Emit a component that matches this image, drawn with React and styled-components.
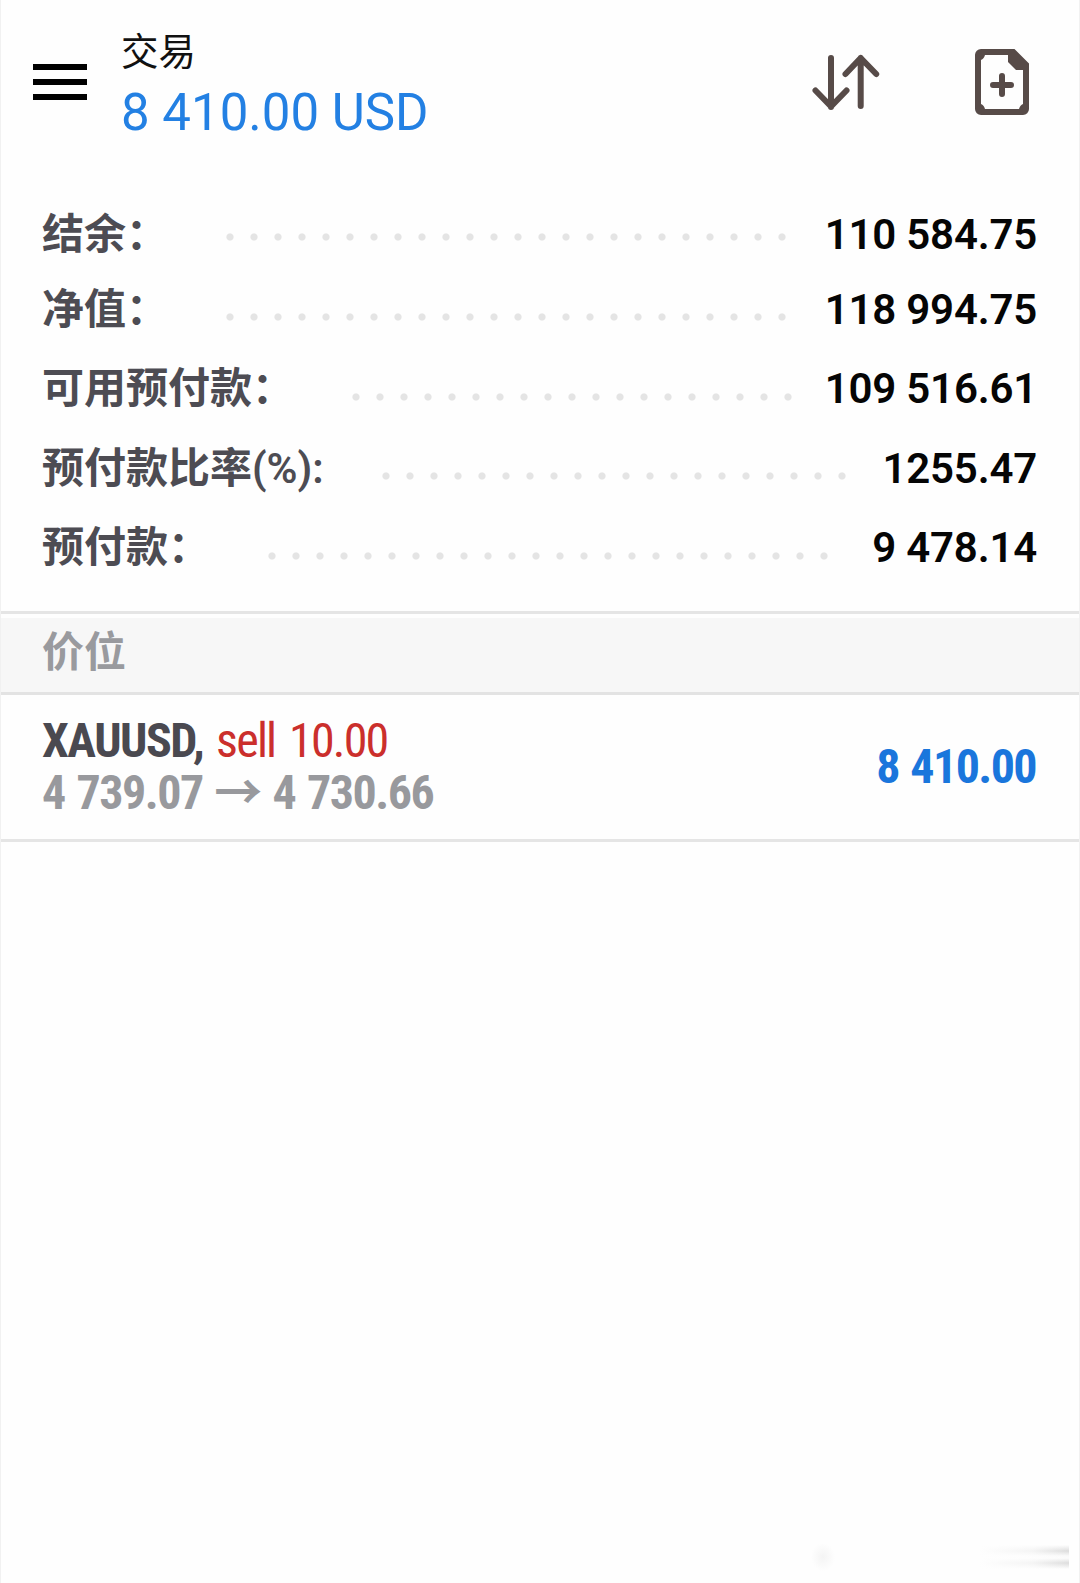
import styled, { createGlobalStyle } from "styled-components"

const GlobalStyle = createGlobalStyle`
  * {
    box-sizing: border-box;
  }
  body {
    margin: 0;
    background-color: #fefefe;
    font-family: Roboto, "Noto Sans CJK SC", sans-serif;
  }
  p {
    margin: 0;
    white-space: nowrap;
  }
`

const Screen = styled.div`
  display: flex;
  flex-direction: column;
  width: 1080px;
  height: 1583px;
  border-left: 1px solid #f1f1f1;
  border-right: 1px solid #f1f1f1;
  overflow: hidden;
`

const Header = styled.header`
  display: flex;
  height: 210px;
  padding: 28px 50px 0 32px;
`

const MenuButton = styled.div`
  display: flex;
  flex-direction: column;
  gap: 9px;
  width: 54px;
  margin: 36px 34px 0 0;
  span {
    height: 6px;
    background-color: #000;
  }
`

const Heading = styled.div`
  flex: 1;
  .title {
    margin-top: 2px;
    font-size: 37.5px;
    line-height: 45px;
    color: #111;
  }
  .profit {
    margin-top: 8px;
    font-size: 51px;
    line-height: 60px;
    color: #2380e3;
  }
`

const Actions = styled.div`
  display: flex;
  align-items: flex-start;
  gap: 97px;
  margin-top: 21px;
  svg {
    display: block;
    overflow: visible;
  }
`

const Summary = styled.div`
  height: 401px;
  padding: 0 42px 0 41px;
`

const SummaryRow = styled.div`
  display: flex;
  align-items: flex-start;
  height: ${(props) => (props.$first ? "74.5px" : "79.5px")};
  font-size: 42px;
  line-height: 50px;
  .label {
    width: ${(props) => props.$labelWidth}px;
    font-weight: 600;
    color: #4d4c53;
  }
  .value {
    flex: 1;
    text-align: right;
    font-weight: 600;
    letter-spacing: -0.2px;
    color: #050505;
  }
`

const Dots = styled.div`
  width: ${(props) => props.$count * 24}px;
  height: 8px;
  margin-top: ${(props) => (props.$first ? 23 : 28.5)}px;
  background: radial-gradient(circle, #e4e4e4 3.1px, transparent 4.1px) 0 0 /
    24px 8px;
`

const SectionTitle = styled.div`
  height: 84px;
  padding: 14px 41px 0;
  border-top: 3px solid #e5e5e5;
  border-bottom: 3px solid #e3e3e3;
  background: linear-gradient(#fefefe 4px, #f7f7f7 4px);
  font-size: 42px;
  line-height: 50px;
  font-weight: 600;
  color: #999a9e;
`

const Position = styled.div`
  display: flex;
  justify-content: space-between;
  height: 147px;
  padding: 20px 43px 0 41px;
  border-bottom: 3px solid #e5e5e5;
  font-size: 48px;
  line-height: 52px;
  font-weight: 700;
  font-stretch: 75%;
  letter-spacing: -1.5px;
  word-spacing: 2.1px;
  .symbol {
    word-spacing: 3.2px;
    color: #4a4950;
  }
  .side {
    font-weight: 400;
    letter-spacing: -1.8px;
    word-spacing: 4.5px;
    color: #cb2f2c;
  }
  .prices {
    color: #98999d;
  }
  .arrow {
    font-family: "Liberation Sans Narrow", Roboto, "Noto Sans CJK SC", sans-serif;
    font-weight: 600;
    line-height: 0;
  }
  .result {
    margin-top: 26px;
    letter-spacing: -1.6px;
    color: #1a76dc;
  }
`

// leftover of the stamp in the lower right corner
const Smudge = styled.div`
  display: flex;
  justify-content: space-between;
  align-items: center;
  width: 258px;
  height: 30px;
  margin: auto 10px 11px auto;
  .mark {
    width: 24px;
    height: 28px;
    background: radial-gradient(closest-side, #f4f4f4, #fefefe);
  }
  .lines {
    width: 90px;
    height: 24px;
    background:
      linear-gradient(
        to right,
        #fefefe,
        rgba(254, 254, 254, 0.7) 60%,
        transparent
      ),
      linear-gradient(
        #fefefe,
        #dcdcdc 25%,
        #fafafa 45%,
        #fcfcfc 55%,
        #dcdcdc 75%,
        #fefefe
      );
  }
`

const SortIcon = () => (
  <svg
    width="66"
    height="66"
    viewBox="0 0 66 66"
    fill="none"
    stroke="#574b48"
    strokeWidth="6"
    strokeLinecap="round"
    strokeLinejoin="round"
  >
    <path d="M19 9v49M3.500 41.500l15.500 16 15.500-16" />
    <path d="M48.700 57V9M33.500 25l15.200-16 15.500 16" />
  </svg>
)

const NewOrderIcon = () => (
  <svg width="54" height="66" viewBox="0 0 54 66" fill="none">
    <path
      fill="#574b48"
      fillRule="evenodd"
      d="M6 0H39.500L54 14.500V60a6 6 0 0 1-6 6H6a6 6 0 0 1-6-6V6a6 6 0 0 1 6-6zM10 6C9 9 8 10 6 11V55C8 56 9 57 10 60H44C45 57 46 56 48 55V21H41L33 13V6z"
    />
    <path
      d="M27 27v18M18 36h18"
      stroke="#574b48"
      strokeWidth="6"
      strokeLinecap="round"
    />
  </svg>
)

const account = [
  { label: "结余：", value: "110 584.75", labelWidth: 176, dots: 24 },
  { label: "净值：", value: "118 994.75", labelWidth: 176, dots: 24 },
  { label: "可用预付款：", value: "109 516.61", labelWidth: 302, dots: 19 },
  { label: "预付款比率(%):", value: "1255.47", labelWidth: 332, dots: 20 },
  { label: "预付款：", value: "9 478.14", labelWidth: 218, dots: 24 },
]

export default function App() {
  return (
    <Screen>
      <GlobalStyle />
      <Header>
        <MenuButton>
          <span />
          <span />
          <span />
        </MenuButton>
        <Heading>
          <p className="title">交易</p>
          <p className="profit">8 410.00 USD</p>
        </Heading>
        <Actions>
          <SortIcon />
          <NewOrderIcon />
        </Actions>
      </Header>

      <Summary>
        {account.map((item, index) => (
          <SummaryRow
            key={item.label}
            $first={index === 0}
            $labelWidth={item.labelWidth}
          >
            <p className="label">{item.label}</p>
            <Dots $count={item.dots} $first={index === 0} />
            <p className="value">{item.value}</p>
          </SummaryRow>
        ))}
      </Summary>

      <SectionTitle>价位</SectionTitle>

      <Position>
        <div>
          <p className="symbol">
            XAUUSD, <span className="side">sell 10.00</span>
          </p>
          <p className="prices">
            4 739.07 <span className="arrow">→</span> 4 730.66
          </p>
        </div>
        <p className="result">8 410.00</p>
      </Position>

      <Smudge>
        <div className="mark" />
        <div className="lines" />
      </Smudge>
    </Screen>
  )
}
